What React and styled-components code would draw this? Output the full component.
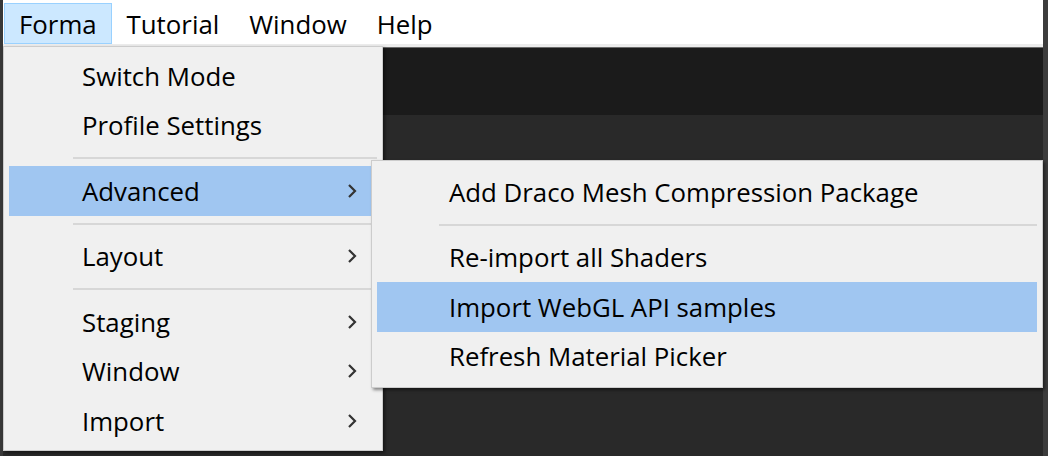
import React from "react"
import styled, { createGlobalStyle } from "styled-components"

const Global = createGlobalStyle`
  html, body {
    margin: 0;
    padding: 0;
    background: #292929;
    overflow: hidden;
  }
  body {
    font-family: "Open Sans", "Noto Sans", sans-serif;
  }
`

const Screen = styled.div`
  display: flex;
  width: 1048px;
  height: 456px;
`

const Edge = styled.div`
  width: ${(p) => p.w}px;
  background: ${(p) => p.bg};
`

const Window = styled.div`
  position: relative;
  flex: 1;
  display: flex;
  flex-direction: column;
`

const MenuBar = styled.div`
  display: flex;
  align-items: stretch;
  height: 47px;
  padding: 3px 0 0 1px;
  box-sizing: border-box;
  background: #fff;
  border-bottom: 3px solid #ececec;
`

const BarItem = styled.div`
  display: flex;
  align-items: center;
  padding: 0 ${(p) => p.pad || 14}px 0 14px;
  font-size: 25.8px;
  color: #000;
  border: 1px solid ${(p) => (p.active ? "#99d1ff" : "transparent")};
  background: ${(p) => (p.active ? "#cce8ff" : "transparent")};
`

const Toolbar = styled.div`
  height: 67px;
  background: #1b1b1b;
  border-top: 1px solid #6a6a6a;
`

const Workspace = styled.div`
  flex: 1;
  background: #292929;
`

const Menu = styled.div`
  position: absolute;
  top: ${(p) => p.top}px;
  left: ${(p) => p.left}px;
  width: ${(p) => p.width}px;
  box-sizing: border-box;
  padding: ${(p) => p.padY}px 5px;
  background: #f0f0f0;
  border: 1px solid #cccccc;
  box-shadow: 2px 2px 3px rgba(0, 0, 0, 0.45);
  display: flex;
  flex-direction: column;
`

const Item = styled.div`
  display: flex;
  align-items: center;
  height: 49.5px;
  padding-left: ${(p) => p.indent}px;
  padding-right: 20px;
  font-size: 25.8px;
  color: #000;
  background: ${(p) => (p.hot ? "#a0c6f1" : "transparent")};
`

const Label = styled.span`
  flex: 1;
  white-space: nowrap;
`

const Separator = styled.div`
  height: 16px;
  display: flex;
  align-items: center;
  padding-left: ${(p) => p.indent}px;

  &::after {
    content: "";
    flex: 1;
    height: 2px;
    background: #d7d7d7;
  }
`

const Chevron = () => (
  <svg width="10" height="16" viewBox="0 0 10 16">
    <polyline points="2,2 8,8 2,14" fill="none" stroke="#333" strokeWidth="2.2" />
  </svg>
)

const main = [
  { label: "Switch Mode" },
  { label: "Profile Settings" },
  { sep: true },
  { label: "Advanced", sub: true, hot: true },
  { sep: true },
  { label: "Layout", sub: true },
  { sep: true },
  { label: "Staging", sub: true },
  { label: "Window", sub: true },
  { label: "Import", sub: true },
]

const advanced = [
  { label: "Add Draco Mesh Compression Package" },
  { sep: true },
  { label: "Re-import all Shaders" },
  { label: "Import WebGL API samples", hot: true },
  { label: "Refresh Material Picker" },
]

function renderItems(list, indent, sepIndent) {
  return list.map((it, i) =>
    it.sep ? (
      <Separator key={i} indent={sepIndent} />
    ) : (
      <Item key={i} indent={indent} hot={it.hot}>
        <Label>{it.label}</Label>
        {it.sub && <Chevron />}
      </Item>
    )
  )
}

export default function App() {
  return (
    <Screen>
      <Global />
      <Edge w={3} bg="#383838" />
      <Window>
        <MenuBar>
          <BarItem active pad={14}>Forma</BarItem>
          <BarItem>Tutorial</BarItem>
          <BarItem>Window</BarItem>
          <BarItem>Help</BarItem>
        </MenuBar>
        <Toolbar />
        <Workspace />

        <Menu top={46} left={0} width={380} padY={4}>
          {renderItems(main, 73, 64)}
        </Menu>

        <Menu top={160} left={368} width={672} padY={6}>
          {renderItems(advanced, 72, 62)}
        </Menu>
      </Window>
      <Edge w={5} bg="#3c3c3c" />
    </Screen>
  )
}
